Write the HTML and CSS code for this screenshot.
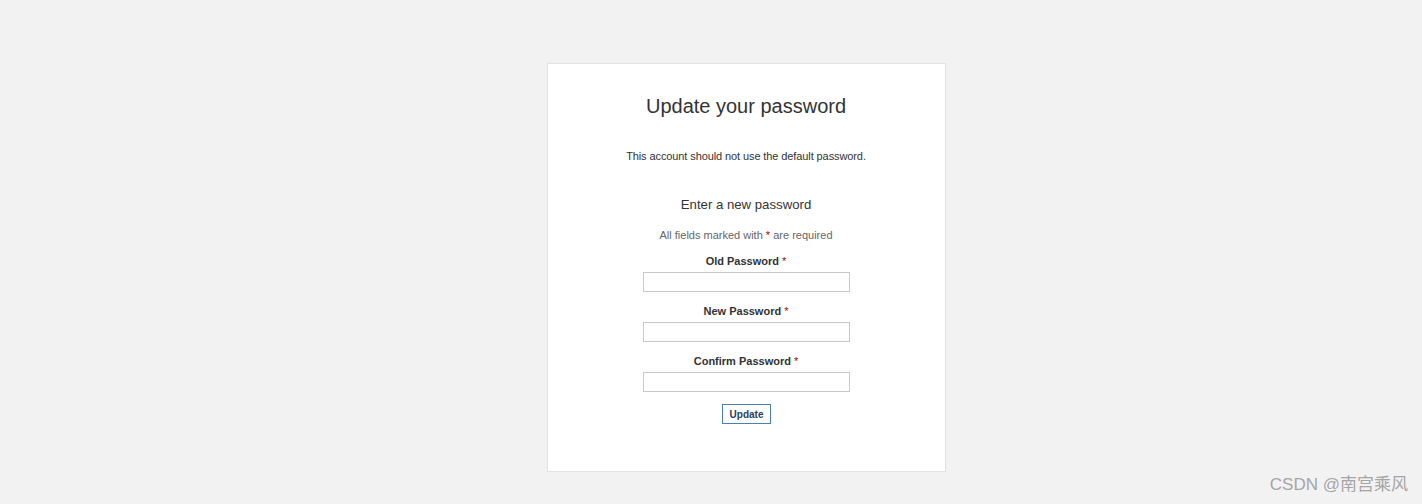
FILE: index.html
```html
<!DOCTYPE html>
<html>
  <head>
    <title>Update your password</title>
    <link rel="stylesheet" href="styles.css">
  </head>

  <body>
    <div class="page">
      <form class="card">
        <h1>Update your password</h1>
        <p class="notice">This account should not use the default password.</p>

        <h2>Enter a new password</h2>
        <p class="hint">All fields marked with <span class="req">*</span> are required</p>

        <!-- Password fields -->
        <label class="field">
          <span class="label">Old Password <span class="req">*</span></span>
          <input type="password" />
        </label>
        <label class="field">
          <span class="label">New Password <span class="req">*</span></span>
          <input type="password" />
        </label>
        <label class="field">
          <span class="label">Confirm Password <span class="req">*</span></span>
          <input type="password" />
        </label>

        <button type="button" class="submit">Update</button>
      </form>
    </div>

    <div class="watermark">CSDN @南宫乘风</div>
  </body>
</html>
```

FILE: styles.css
```css
* {
  margin: 0;
  padding: 0;
  box-sizing: border-box;
  font-family: 'Liberation Sans', Arial, 'Noto Sans CJK SC', sans-serif;
}

body {
  background: #f2f2f2;
  color: #333;
  height: 504px;
  overflow: hidden;
}

.page {
  display: flex;
  justify-content: center;
  padding-top: 63px;
  padding-left: 70px;
}

.card {
  width: 399px;
  background: #fff;
  border: 1px solid #e2e2e2;
  padding: 30px 0 47px;
  display: flex;
  flex-direction: column;
  align-items: center;
  text-align: center;
}

h1 {
  font-size: 20px;
  line-height: 24px;
  font-weight: normal;
  color: #333;
}

.notice {
  margin-top: 31px;
  font-size: 11px;
  line-height: 14px;
  letter-spacing: -0.1px;
}

h2 {
  margin-top: 33px;
  font-size: 13.2px;
  line-height: 18px;
  font-weight: normal;
}

.hint {
  margin-top: 14px;
  font-size: 11px;
  line-height: 14px;
  color: #666;
}

.req {
  color: #a00;
}

.field {
  display: flex;
  flex-direction: column;
  align-items: center;
  margin-top: 12px;
}

.field .label {
  display: block;
  height: 14px;
  font-size: 11px;
  line-height: 14px;
  font-weight: bold;
  color: #333;
}

.field .label .req {
  font-weight: normal;
}

.field input {
  margin-top: 4px;
  width: 207px;
  height: 20px;
  border: 1px solid #c8c8c8;
  background: #fff;
  outline: none;
}

.submit {
  margin-top: 12px;
  height: 20px;
  width: 49px;
  margin-left: 1px;
  border: 1px solid #4a7fb0;
  background: #fff;
  color: #26405e;
  font-size: 10px;
  font-weight: bold;
  cursor: pointer;
}

.watermark {
  position: absolute;
  right: 14px;
  top: 475px;
  font-size: 17px;
  line-height: 20px;
  color: #a5a5a5;
}
```
